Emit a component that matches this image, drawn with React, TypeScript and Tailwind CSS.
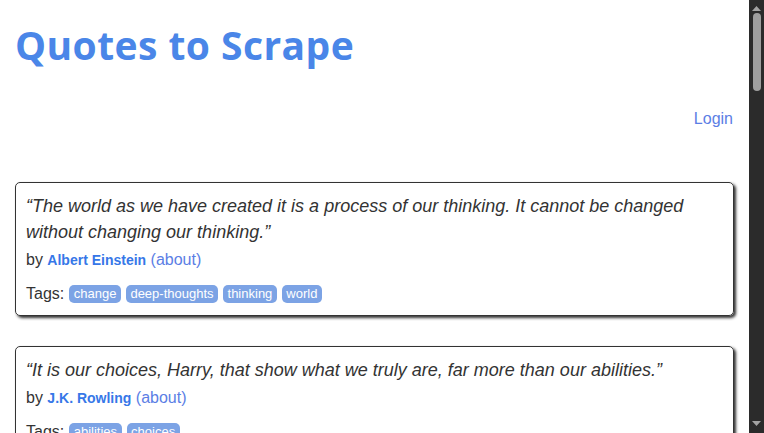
const quotes = [
  {
    text: '“The world as we have created it is a process of our thinking. It cannot be changed without changing our thinking.”',
    author: 'Albert Einstein',
    tags: ['change', 'deep-thoughts', 'thinking', 'world'],
  },
  {
    text: '“It is our choices, Harry, that show what we truly are, far more than our abilities.”',
    author: 'J.K. Rowling',
    tags: ['abilities', 'choices'],
  },
]

const Quote = ({ q }: { q: (typeof quotes)[number] }) => (
  <div className="mb-[30px] rounded-[5px] border border-[#333] p-[10px] shadow-[2px_2px_3px_#333]">
    <div className="text-[18px] leading-[26px] italic text-[#333]">{q.text}</div>
    <div className="mt-[4px] text-[16px] leading-[22px] text-[#333]">
      by <span className="text-[14px] font-bold text-[#3677e8]">{q.author}</span>{' '}
      <span className="text-[#5b7ee5]">(about)</span>
    </div>
    <div className="mt-[12px] flex items-center gap-[5px] text-[16px] leading-[22px] text-[#333]">
      <span>Tags:</span>
      {q.tags.map((t) => (
        <span
          key={t}
          className="rounded-[5px] bg-[#7ca3e5] px-[4.5px] text-[13px] leading-[18px] text-white"
        >
          {t}
        </span>
      ))}
    </div>
  </div>
)

export default function App() {
  return (
    <div className="flex h-[433px] w-[764px] overflow-hidden bg-white font-['Liberation_Sans',Arial,sans-serif]">
      <div className="flex-1 overflow-hidden px-[15px]">
        <div className="pt-[20px]">
          <h1 className="font-['Open_Sans',sans-serif] text-[39px] leading-[50px] font-bold tracking-[0.45px] text-[#4a86e8]">
            Quotes to Scrape
          </h1>
        </div>
        <div className="mt-[38px] flex justify-end pr-[1px]">
          <span className="text-[16px] leading-[22px] text-[#5b7ee5]">Login</span>
        </div>
        <div className="mt-[52px]">
          {quotes.map((q) => (
            <Quote key={q.author} q={q} />
          ))}
        </div>
      </div>
      <div className="flex w-[15px] flex-col items-center bg-[#2b2b2b]">
        <svg width="9" height="5" viewBox="0 0 9 5" className="mt-[6px]">
          <path d="M0 5 L4.5 0 L9 5 Z" fill="#a3a3a3" />
        </svg>
        <div className="mt-[2px] h-[78px] w-[8px] rounded-full bg-[#9f9f9f]" />
        <div className="flex-1" />
        <svg width="9" height="5" viewBox="0 0 9 5" className="mb-[7px]">
          <path d="M0 0 L9 0 L4.5 5 Z" fill="#a3a3a3" />
        </svg>
      </div>
    </div>
  )
}
